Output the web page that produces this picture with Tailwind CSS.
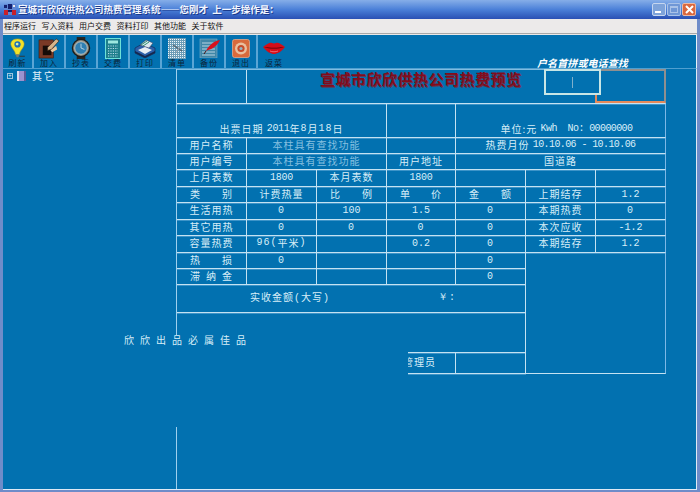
<!DOCTYPE html>
<html lang="zh">
<head>
<meta charset="utf-8">
<script src="https://cdn.jsdelivr.net/npm/@tailwindcss/browser@4"></script>
</head>
<body class="bg-[#0271b0]">
<div class="relative w-[700px] h-[492px] overflow-hidden flex flex-col bg-[#6f8cc9] font-['Noto_Sans_CJK_SC',sans-serif]">
  <!-- title bar -->
  <div class="h-[19px] shrink-0 flex items-center pl-[4px] pr-[4px] bg-gradient-to-b from-[#86aee8] via-[#4b80d8] to-[#2a50b4]">
    <svg width="12" height="11" viewBox="0 0 12 11" class="shrink-0"><rect width="12" height="11" fill="#5f86d2"/><rect x="0" y="6" width="4" height="5" fill="#c8202a"/><rect x="4" y="0" width="4" height="5" fill="#14206e"/><rect x="8" y="6" width="4" height="5" fill="#c8202a"/><rect x="4" y="6" width="4" height="2" fill="#14206e"/><rect x="0" y="1" width="3" height="3" fill="#14206e"/><rect x="9" y="1" width="2" height="2" fill="#e8e8f0"/></svg>
    <span class="ml-[2px] text-[9.500px] leading-none font-bold text-[#f2f6ff] [text-shadow:1px_1px_0_#1b3a8c] whitespace-nowrap">宣城市欣欣供热公司热费管理系统——您刚才&nbsp;&nbsp;上一步操作是：</span>
    <div class="flex gap-[1px] ml-auto">
      <div class="w-[14px] h-[13px] rounded-[2px] bg-[#7ea3da] border border-[#c6d6ef] flex items-end pl-[2px] pb-[2px]"><div class="w-[6px] h-[2px] bg-white"></div></div>
      <div class="w-[14px] h-[13px] rounded-[2px] bg-[#6f97d6] border border-[#a9c2e8] flex items-center justify-center"><div class="w-[8px] h-[7px] border border-[#a9c2e8] border-t-2"></div></div>
      <div class="w-[14px] h-[13px] rounded-[2px] bg-[#d9683f] border border-[#eeb9a0] flex items-center justify-center"><svg width="9" height="9" viewBox="0 0 9 9"><path d="M1 1 L8 8 M8 1 L1 8" stroke="#fff" stroke-width="2"/></svg></div>
    </div>
  </div>
  <!-- menu -->
  <div class="h-[14px] shrink-0 mx-[3px] bg-[#eceaea] flex items-center pl-[1px] text-[8px] leading-none text-[#111] gap-[5.500px] whitespace-nowrap">
    <span>程序运行</span><span>写入资料</span><span>用户交费</span><span>资料打印</span><span>其他功能</span><span>关于软件</span>
  </div>
  <div class="h-[2px] shrink-0 mx-[3px] bg-[#a8a8a8] border-b border-[#e8e8e8]"></div>
  <!-- toolbar -->
  <div class="h-[34px] shrink-0 mx-[3px] bg-[#0271b0] border-b border-[#4f9fd0] border-r border-r-[#e8f2fa] flex text-[8px] leading-none text-[#0c2438]">
    <div class="w-[31px] border-r-2 border-[#5aa5d5] flex flex-col items-center pt-[2px]">
      <div class="h-[22px] flex items-center"><svg width="17" height="21" viewBox="0 0 18 23"><path d="M9 1 C3 1 1 5 2 8 C3 12 6 13 7 18 L11 18 C12 13 15 12 16 8 C17 5 15 1 9 1Z" fill="#f2e22a" stroke="#c8a810" stroke-width=".6"/><circle cx="9" cy="7" r="3.400" fill="#1c6fb8"/><circle cx="8.600" cy="6.600" r="1.500" fill="#d9f0a0"/><path d="M7 18 L11 18 L10 21 L8 21Z" fill="#777"/><path d="M11 20 L17 20" stroke="#333" stroke-width="1"/></svg></div>
      <span class="tracking-[1px]">刷新</span>
    </div>
    <div class="w-[32px] border-r-2 border-[#5aa5d5] flex flex-col items-center pt-[2px]">
      <div class="h-[22px] flex items-center"><svg width="22" height="21" viewBox="0 0 23 22"><rect x="1" y="2" width="15" height="19" fill="#7a3a26" stroke="#3c1a10" stroke-width=".6"/><rect x="5" y="8" width="9" height="10" fill="#160c08"/><path d="M10 10 L19 1 L22 3 L14 12 L10 13Z" fill="#d8b48a" stroke="#2a1a10" stroke-width=".6"/><path d="M13 13 L19 8 L20 12 L15 15Z" fill="#e8c8a0"/></svg></div>
      <span class="tracking-[1px]">加入</span>
    </div>
    <div class="w-[32px] border-r-2 border-[#5aa5d5] flex flex-col items-center pt-[2px]">
      <div class="h-[22px] flex items-center"><svg width="20" height="22" viewBox="0 0 21 23"><rect x="6" y="0" width="9" height="5" fill="#2a2420"/><rect x="6" y="18" width="9" height="5" fill="#2a2420"/><circle cx="10.500" cy="11.500" r="9" fill="#8a8a80" stroke="#1e1c18" stroke-width="1.400"/><circle cx="10.500" cy="11.500" r="6.600" fill="#2f7fb2" stroke="#d0d0c8" stroke-width=".8"/><path d="M10.500 11.500 L10.500 7 M10.500 11.500 L14 13" stroke="#dfe8ee" stroke-width=".8"/></svg></div>
      <span class="tracking-[1px]">抄表</span>
    </div>
    <div class="w-[32px] border-r-2 border-[#5aa5d5] flex flex-col items-center pt-[2px]">
      <div class="h-[22px] flex items-center"><svg width="16" height="21" viewBox="0 0 16 21"><rect x=".5" y=".5" width="15" height="20" fill="#1e7f8c" stroke="#6ee0d8"/><rect x="3" y="2.500" width="10" height="3" fill="#9ee8e0"/><path d="M3 8 H13 M3 10.500 H13 M3 13 H13 M3 15.500 H13 M3 18 H13" stroke="#bde" stroke-width="1.100" stroke-dasharray="1.200 1.200"/></svg></div>
      <span class="tracking-[1px]">交费</span>
    </div>
    <div class="w-[32px] border-r-2 border-[#5aa5d5] flex flex-col items-center pt-[2px]">
      <div class="h-[22px] flex items-center"><svg width="22" height="19" viewBox="0 0 22 19"><path d="M1 9 L10 4 L21 9 L21 14 L11 19 L1 14Z" fill="#2c5fa8" stroke="#0f2450" stroke-width=".6"/><path d="M6 6 L12 1 L19 4 L15 9Z" fill="#dce8f0" stroke="#335" stroke-width=".5"/><path d="M7 6 L13 2 M9 7 L15 3" stroke="#2b8f6c" stroke-width="1"/><path d="M4 11 L11 8 L18 11 L11 15Z" fill="#e8eef4"/><path d="M1 14 L11 19 L21 14 L21 12 L11 17 L1 12Z" fill="#15284e"/></svg></div>
      <span class="tracking-[1px]">打印</span>
    </div>
    <div class="w-[32px] border-r-2 border-[#5aa5d5] flex flex-col items-center pt-[2px]">
      <div class="h-[22px] flex items-center"><svg width="18" height="21" viewBox="0 0 18 21"><rect width="18" height="21" fill="#6b9cb6"/><path d="M0 1.500 H18 M0 3.500 H18 M0 5.500 H18 M0 7.500 H18 M0 9.500 H18 M0 11.500 H18 M0 13.500 H18 M0 15.500 H18 M0 17.500 H18 M0 19.500 H18" stroke="#f0f6fa" stroke-width="1" stroke-dasharray="1 1"/><path d="M5 7 L14 13" stroke="#55646f" stroke-width="1.400"/><path d="M12 8 L8 15" stroke="#8a9aa8" stroke-width="1"/></svg></div>
      <span class="tracking-[1px]">清单</span>
    </div>
    <div class="w-[32px] border-r-2 border-[#5aa5d5] flex flex-col items-center pt-[2px]">
      <div class="h-[22px] flex items-center"><svg width="21" height="20" viewBox="0 0 21 20"><rect x="1" y="1" width="17" height="19" fill="#3f87a8" stroke="#7fb0c8" stroke-width=".6"/><path d="M3 5 H16 M3 8 H16 M3 11 H16 M3 14 H16 M3 17 H16" stroke="#b9d4e2" stroke-width="1"/><path d="M7 13 C10 7 15 3 21 2 C19 7 14 11 9 12Z" fill="#d80f1c"/><path d="M7 13 L5 16" stroke="#401010" stroke-width="1"/></svg></div>
      <span class="tracking-[1px]">备份</span>
    </div>
    <div class="w-[32px] border-r-2 border-[#5aa5d5] flex flex-col items-center pt-[2px]">
      <div class="h-[22px] flex items-center"><svg width="18" height="19" viewBox="0 0 18 19"><rect x=".5" y=".5" width="17" height="18" rx="2" fill="#d86a3c" stroke="#f0b090" stroke-width=".7"/><circle cx="9" cy="9.500" r="6" fill="#e8c0a0"/><circle cx="9" cy="9.500" r="3.600" fill="#c74a28"/><circle cx="9" cy="9.500" r="1.600" fill="#8fb4c4"/></svg></div>
      <span class="tracking-[1px]">退出</span>
    </div>
    <div class="w-[32px] flex flex-col items-center pt-[2px]">
      <div class="h-[22px] flex items-center"><svg width="22" height="12" viewBox="0 0 22 12"><path d="M0 5 C4 2 7 0 9 1 C10 1.500 12 1.500 13 1 C15 0 18 2 22 5 C18 10 14 12 11 12 C8 12 4 10 0 5Z" fill="#d40d18"/><path d="M1 5 C6 6 16 6 21 5 C16 7 6 7 1 5Z" fill="#4a0408"/><path d="M7 9 C9 10 13 10 15 9" stroke="#f08088" stroke-width=".8" fill="none"/></svg></div>
      <span class="tracking-[1px]">返菜</span>
    </div>
  </div>
  <!-- main -->
  <div class="flex-1 min-h-0 flex mx-[3px] mb-[2px] bg-[#0271b0] border-b border-r border-[#dfeaf6]">
    <!-- tree -->
    <div class="w-[174px] shrink-0 border-r border-[#9fd0ee] pl-[4px] pt-[1px] flex items-start">
      <div class="flex items-center h-[11px]">
        <div class="w-[6px] h-[6px] border border-[#9fc7df] flex items-center justify-center text-[#d8eef8] text-[6px] leading-none">+</div>
        <svg width="9" height="10" viewBox="0 0 9 10" class="ml-[4px]"><rect width="9" height="10" fill="#9b93cf"/><rect x="0" width="2" height="10" fill="#e0ddf0"/><rect x="7" width="2" height="10" fill="#5e5a98"/></svg>
        <span class="ml-[6px] text-[10px] leading-none tracking-[2px] text-[#e2f2fa]">其它</span>
      </div>
    </div>
    <!-- report -->
    <div class="flex-1 min-w-0">
      <div class="w-[489px] border-t border-[#7fbce0] grid grid-cols-[70px_70px_70px_69px_70px_70px_70px] grid-rows-[34px_34px_16px_16px_17px_16px_17px_16px_17px_16px_16px_28px_40px_21px] text-[10px] leading-none text-[#d8eef8] whitespace-nowrap [&>div]:flex [&>div]:items-center [&>div]:justify-center [&>div]:border-r [&>div]:border-b [&>div]:border-[#c4e2f2] [&>div]:shadow-[0_1px_0_#3d94c8] [&>div]:tracking-[1px] [&>div]:pb-[2px]">
        <div></div>
        <div class="col-span-6 border-r-[#7db8e6]! justify-start! items-start! pl-[73px] pt-0 text-[15px]! leading-[18px]! font-bold text-[#820c1c] tracking-[.5px]! [text-shadow:1px_1px_0_#5a3a58]">宣城市欣欣供热公司热费预览</div>

        <div class="col-span-3 items-end! pb-[3px]!">出票日期&nbsp;<span class="font-['Liberation_Mono',monospace] tracking-[-.3px]">2011</span>年<span class="font-['Liberation_Mono',monospace]">8</span>月<span class="font-['Liberation_Mono',monospace]">18</span>日</div>
        <div></div>
        <div class="col-span-3 border-r-[#7db8e6]! items-end! pb-[3px]! pl-[12px]">单位:元&nbsp;<span class="font-['Liberation_Mono',monospace] tracking-[-.6px] whitespace-pre">Kwh  No: 00000000</span></div>

        <div>用户名称</div>
        <div class="col-span-2 text-[#86c0e0]">本柱具有查找功能</div>
        <div></div>
        <div class="col-span-3 border-r-[#7db8e6]!">热费月份&nbsp;<span class="font-['Liberation_Mono',monospace] tracking-[-.6px]">10.10.06 - 10.10.06</span></div>

        <div>用户编号</div>
        <div class="col-span-2 text-[#86c0e0]">本柱具有查找功能</div>
        <div>用户地址</div>
        <div class="col-span-3 border-r-[#7db8e6]!">国道路</div>

        <div>上月表数</div>
        <div class="font-['Liberation_Mono',monospace] tracking-[-.2px]! pb-0!">1800</div>
        <div>本月表数</div>
        <div class="font-['Liberation_Mono',monospace] tracking-[-.2px]! pb-0!">1800</div>
        <div></div>
        <div></div>
        <div class="border-r-[#7db8e6]!"></div>

        <div class="justify-between! px-[13px]"><span>类</span><span>别</span></div>
        <div>计费热量</div>
        <div class="justify-between! px-[13px]"><span>比</span><span>例</span></div>
        <div class="justify-between! px-[13px]"><span>单</span><span>价</span></div>
        <div class="justify-between! px-[13px]"><span>金</span><span>额</span></div>
        <div>上期结存</div>
        <div class="border-r-[#7db8e6]! font-['Liberation_Mono',monospace] tracking-[0px]! pb-0!">1.2</div>

        <div>生活用热</div>
        <div class="font-['Liberation_Mono',monospace] pb-0!">0</div>
        <div class="font-['Liberation_Mono',monospace] tracking-[0px]! pb-0!">100</div>
        <div class="font-['Liberation_Mono',monospace] tracking-[0px]! pb-0!">1.5</div>
        <div class="font-['Liberation_Mono',monospace] pb-0!">0</div>
        <div>本期热费</div>
        <div class="border-r-[#7db8e6]! font-['Liberation_Mono',monospace] pb-0!">0</div>

        <div>其它用热</div>
        <div class="font-['Liberation_Mono',monospace] pb-0!">0</div>
        <div class="font-['Liberation_Mono',monospace] pb-0!">0</div>
        <div class="font-['Liberation_Mono',monospace] pb-0!">0</div>
        <div class="font-['Liberation_Mono',monospace] pb-0!">0</div>
        <div>本次应收</div>
        <div class="border-r-[#7db8e6]! font-['Liberation_Mono',monospace] tracking-[0px]! pb-0!">-1.2</div>

        <div>容量热费</div>
        <div><span class="font-['Liberation_Mono',monospace]">96(</span>平米<span class="font-['Liberation_Mono',monospace]">)</span></div>
        <div></div>
        <div class="font-['Liberation_Mono',monospace] tracking-[0px]! pb-0!">0.2</div>
        <div class="font-['Liberation_Mono',monospace] pb-0!">0</div>
        <div>本期结存</div>
        <div class="border-r-[#7db8e6]! font-['Liberation_Mono',monospace] tracking-[0px]! pb-0!">1.2</div>

        <div class="justify-between! px-[13px]"><span>热</span><span>损</span></div>
        <div class="font-['Liberation_Mono',monospace] pb-0!">0</div>
        <div></div>
        <div></div>
        <div class="font-['Liberation_Mono',monospace] pb-0!">0</div>
        <div class="col-span-2 row-span-5 border-r-[#7db8e6]! shadow-none!"></div>

        <div class="justify-between! px-[13px]"><span>滞</span><span>纳</span><span>金</span></div>
        <div></div>
        <div></div>
        <div></div>
        <div class="font-['Liberation_Mono',monospace] pb-0!">0</div>

        <div class="col-span-5 justify-start! pl-[73px]"><span>实收金额<span class="font-['Liberation_Mono',monospace]">(</span>大写<span class="font-['Liberation_Mono',monospace]">)</span></span><span class="ml-[108px] font-['Liberation_Mono',monospace]">￥:</span></div>

        <div class="col-span-5"></div>

        <div class="col-span-3"></div>
        <div class="justify-start! pl-[16px]">管理员</div>
        <div></div>
      </div>
    </div>
  </div>

  <!-- slogan panel that covers part of the report -->
  <div class="absolute left-[100px] top-[335px] w-[308px] h-[92px] bg-[#0271b0] pl-[24px] text-[10px] leading-[10px] tracking-[6px] text-[#d8eef8] whitespace-nowrap">欣欣出品必属佳品</div>

  <!-- search overlay -->
  <div class="absolute left-[537px] top-[57px] text-[10px] leading-[12px] font-bold tracking-[.1px] text-white whitespace-nowrap italic">户名首拼或电话查找</div>
  <div class="absolute left-[595px] top-[69px] w-[71px] h-[34px] border-2 border-[#8f8f8f] border-b-[#e58a5a] border-l-[#e58a5a]"></div>
  <div class="absolute left-[544px] top-[69px] w-[57px] h-[26px] border-2 border-[#c8e6e6] bg-[#0271b0] flex items-center pl-[26px]"><div class="w-[1px] h-[11px] bg-[#7fb0cc]"></div></div>
</div>
</body>
</html>
